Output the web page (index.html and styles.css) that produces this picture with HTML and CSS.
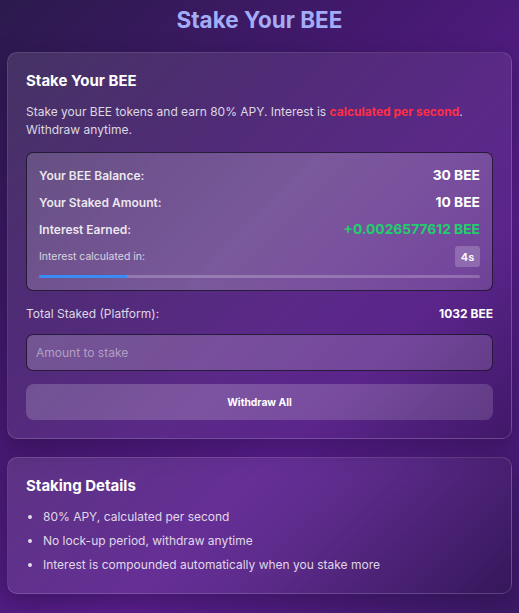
FILE: index.html
```html
<!DOCTYPE html>
<html>
<head>
<meta charset="utf-8">
<link rel="stylesheet" href="styles.css">
</head>
<body>
<h1 class="page-title">Stake Your BEE</h1>
<section class="card">
  <h2 class="card-title">Stake Your BEE</h2>
  <p class="desc">Stake your BEE tokens and earn 80% APY. Interest is <span class="hot">calculated per second</span>. Withdraw anytime.</p>
  <div class="stats">
    <div class="row"><span class="label">Your BEE Balance:</span><span class="value">30 BEE</span></div>
    <div class="row"><span class="label">Your Staked Amount:</span><span class="value">10 BEE</span></div>
    <div class="row"><span class="label">Interest Earned:</span><span class="value green">+0.0026577612 BEE</span></div>
    <div class="row timer"><span class="small">Interest calculated in:</span><span class="badge">4s</span></div>
    <div class="progress"><div class="fill" style="width:20%"></div></div>
  </div>
  <div class="total"><span>Total Staked (Platform):</span><span class="total-val">1032 BEE</span></div>
  <input class="amount" type="text" placeholder="Amount to stake">
  <button class="btn">Withdraw All</button>
</section>
<section class="card details">
  <h2 class="card-title">Staking Details</h2>
  <ul class="list">
    <li>80% APY, calculated per second</li>
    <li>No lock-up period, withdraw anytime</li>
    <li>Interest is compounded automatically when you stake more</li>
  </ul>
</section>
</body>
</html>
```
FILE: styles.css
```css
html, body { height: 100%; }
body {
  margin: 0;
  font-family: Inter, "Noto Sans", sans-serif;
  color: #fff;
  background: linear-gradient(135deg, #2b1a4c 0%, #44196f 35%, #5a1f8e 65%, #3c1a66 100%);
  padding: 0 7px;
  box-sizing: border-box;
  overflow: hidden;
}
.page-title {
  margin: 0;
  padding: 6px 0 0;
  height: 52px;
  box-sizing: border-box;
  text-align: center;
  font-size: 22.5px;
  line-height: 28px;
  font-weight: 700;
  color: #a3acf7;
}
.card {
  border: 1px solid rgba(255,255,255,0.14);
  border-radius: 10px;
  padding: 18px;
  background: linear-gradient(135deg, rgba(255,255,255,0.11), rgba(255,255,255,0.06) 60%, rgba(0,0,0,0.12));
  box-shadow: 0 8px 24px rgba(20,5,40,0.35);
  margin-bottom: 18px;
}
.card-title {
  margin: 0;
  font-size: 15px;
  line-height: 20px;
  font-weight: 700;
  color: #fff;
}
.desc {
  margin: 12px 0 13px;
  font-size: 12px;
  line-height: 18px;
  color: rgba(255,255,255,0.82);
}
.hot { color: #ff2f45; font-weight: 700; }
.stats {
  border: 1px solid rgba(15,10,30,0.75);
  border-radius: 7px;
  padding: 12px;
  background: linear-gradient(135deg, rgba(255,255,255,0.16), rgba(255,255,255,0.22) 50%, rgba(255,255,255,0.14));
}
.row {
  display: flex;
  justify-content: space-between;
  align-items: center;
  height: 20px;
  margin-bottom: 7px;
}
.label { font-size: 12px; font-weight: 600; color: rgba(255,255,255,0.88); }
.value { font-size: 13.8px; font-weight: 700; color: #fff; }
.green { color: #1fcf6c; }
.row.timer { height: 21px; margin-bottom: 8px; }
.small { font-size: 10.5px; color: rgba(255,255,255,0.75); }
.badge {
  font-size: 11px;
  font-weight: 600;
  background: rgba(255,255,255,0.2);
  border-radius: 3px;
  width: 25px;
  height: 21px;
  display: flex;
  align-items: center;
  justify-content: center;
  color: #fff;
}
.progress {
  height: 3px;
  background: rgba(255,255,255,0.22);
  border-radius: 2px;
  overflow: hidden;
}
.fill { height: 100%; background: #3b8bf5; }
.total {
  display: flex;
  justify-content: space-between;
  align-items: center;
  margin: 13px 0 12px;
  height: 18px;
  font-size: 12px;
  color: rgba(255,255,255,0.82);
}
.total-val { font-weight: 700; color: #fff; }
.amount {
  display: block;
  width: 100%;
  box-sizing: border-box;
  height: 37px;
  border: 1px solid rgba(15,10,30,0.75);
  border-radius: 7px;
  background: linear-gradient(135deg, rgba(255,255,255,0.2), rgba(255,255,255,0.14));
  padding: 0 9px;
  font-family: inherit;
  font-size: 12px;
  color: #fff;
  outline: none;
}
.amount::placeholder { color: rgba(255,255,255,0.45); }
.btn {
  display: block;
  width: 100%;
  margin-top: 13px;
  height: 36px;
  border: none;
  border-radius: 8px;
  background: linear-gradient(135deg, rgba(255,255,255,0.18), rgba(255,255,255,0.2) 40%, rgba(255,255,255,0.14));
  font-family: inherit;
  font-size: 10.3px;
  font-weight: 700;
  color: #fff;
}
.details { padding-top: 18px; }
.list {
  margin: 11px 0 0;
  padding-left: 17px;
  font-size: 12px;
  color: rgba(255,255,255,0.82);
}
.list li { line-height: 20px; margin-bottom: 4px; }
.list li:last-child { margin-bottom: 0; }
```
